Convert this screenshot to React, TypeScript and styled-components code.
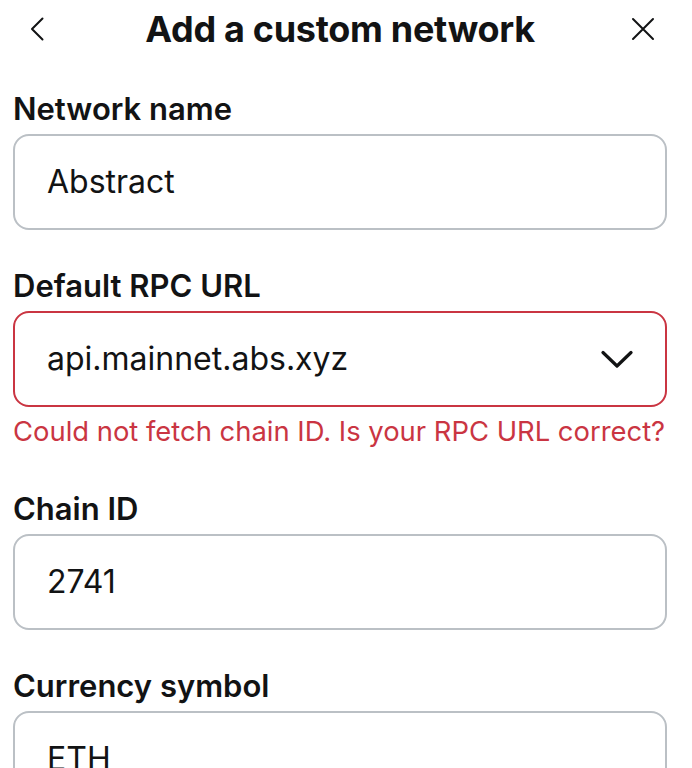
import React from 'react';
import styled, { createGlobalStyle } from 'styled-components';

const GlobalStyle = createGlobalStyle`
  html, body {
    margin: 0;
    padding: 0;
    background: #ffffff;
  }
  body {
    font-family: Inter, 'Noto Sans', sans-serif;
    color: #121314;
  }
`;

const Page = styled.div`
  width: 654px;
  padding: 0 25px 0 13px;
`;

const Header = styled.header`
  display: grid;
  grid-template-columns: 48px 1fr 48px;
  align-items: center;
  height: 58px;
`;

const IconButton = styled.button`
  display: flex;
  align-items: center;
  justify-content: center;
  width: 48px;
  height: 48px;
  padding: 0;
  border: none;
  background: transparent;
  color: #121314;
  cursor: pointer;
`;

const Title = styled.h1`
  margin: 0;
  text-align: center;
  font-size: 36px;
  font-weight: 700;
  letter-spacing: -0.3px;
  line-height: 44px;
`;

const Form = styled.form`
  display: flex;
  flex-direction: column;
  padding-top: 31px;
`;

const Field = styled.div`
  display: flex;
  flex-direction: column;
  & + & {
    margin-top: 36px;
  }
`;

const Label = styled.label`
  font-size: 31px;
  font-weight: 600;
  line-height: 40px;
  margin-bottom: 5px;
`;

const InputBox = styled.div<{ $error?: boolean }>`
  display: flex;
  align-items: center;
  justify-content: space-between;
  box-sizing: border-box;
  height: 96px;
  padding: 0 32px;
  border: 2px solid ${(p) => (p.$error ? '#ca3542' : '#bbc0c5')};
  border-radius: 16px;
  background: #ffffff;
`;

const Value = styled.span`
  font-size: 32px;
  font-weight: 400;
  line-height: 40px;
`;

const ErrorText = styled.p`
  margin: 7px 0 5px;
  font-size: 27.4px;
  line-height: 34px;
  color: #ca3542;
  white-space: nowrap;
`;

const ChevronLeft = () => (
  <svg width="14" height="24" viewBox="0 0 14 24" fill="none">
    <path d="M12.5 1.5 2 12l10.5 10.5" stroke="currentColor" strokeWidth="2" strokeLinecap="round" strokeLinejoin="round" />
  </svg>
);

const CloseIcon = () => (
  <svg width="24" height="24" viewBox="0 0 24 24" fill="none">
    <path d="M2 2l20 20M22 2 2 22" stroke="currentColor" strokeWidth="2" strokeLinecap="round" />
  </svg>
);

const ChevronDown = () => (
  <svg width="32" height="19" viewBox="0 0 32 19" fill="none">
    <path d="M2 2.5 16 16 30 2.5" stroke="currentColor" strokeWidth="3.2" strokeLinecap="round" strokeLinejoin="round" />
  </svg>
);

const fields = [
  { label: 'Network name', value: 'Abstract' },
  { label: 'Default RPC URL', value: 'api.mainnet.abs.xyz', select: true, error: 'Could not fetch chain ID. Is your RPC URL correct?' },
  { label: 'Chain ID', value: '2741' },
  { label: 'Currency symbol', value: 'ETH' },
];

export default function App() {
  return (
    <>
      <GlobalStyle />
      <Page>
        <Header>
          <IconButton aria-label="Back">
            <ChevronLeft />
          </IconButton>
          <Title>Add a custom network</Title>
          <IconButton aria-label="Close">
            <CloseIcon />
          </IconButton>
        </Header>
        <Form>
          {fields.map((f) => (
            <Field key={f.label}>
              <Label>{f.label}</Label>
              <InputBox $error={!!f.error}>
                <Value>{f.value}</Value>
                {f.select && <ChevronDown />}
              </InputBox>
              {f.error && <ErrorText>{f.error}</ErrorText>}
            </Field>
          ))}
        </Form>
      </Page>
    </>
  );
}
